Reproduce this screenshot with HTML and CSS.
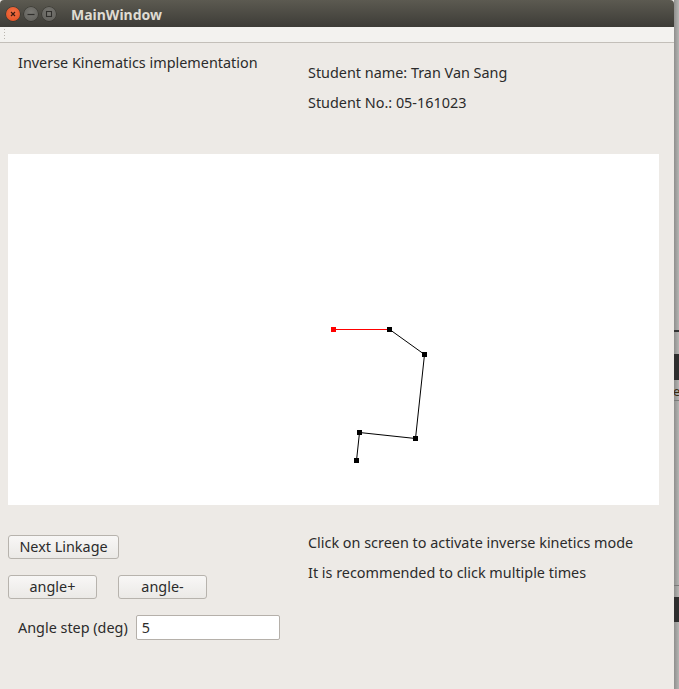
FILE: index.html
```html
<!DOCTYPE html>
<html>
<head>
<meta charset="utf-8">
<link rel="stylesheet" href="styles.css">
</head>
<body>
<div class="screen">
  <div class="window">
    <div class="titlebar">
      <div class="wbtns">
        <span class="wbtn close"><svg width="14" height="14" viewBox="0 0 14 14"><path d="M5 5 L9 9 M9 5 L5 9" stroke="#3a1a10" stroke-width="1.2"/></svg></span>
        <span class="wbtn"><svg width="14" height="14" viewBox="0 0 14 14"><path d="M3.5 7.5 H10.5" stroke="#2f2e2b" stroke-width="1.2"/></svg></span>
        <span class="wbtn"><svg width="14" height="14" viewBox="0 0 14 14"><rect x="4.5" y="4.5" width="5" height="5" fill="none" stroke="#2f2e2b" stroke-width="1.1"/></svg></span>
      </div>
      <div class="title">MainWindow</div>
    </div>
    <div class="toolbar"><span class="grip"></span></div>
    <div class="central">
      <div class="header">
        <div class="heading">Inverse Kinematics implementation</div>
        <div class="student">
          <div class="line">Student name: Tran Van Sang</div>
          <div class="line">Student No.: 05-161023</div>
        </div>
      </div>
      <div class="canvas">
        <svg width="651" height="351" viewBox="0 0 651 351">
          <g shape-rendering="crispEdges">
            <line x1="325" y1="175.5" x2="381" y2="175.5" stroke="#ff0000" stroke-width="1"/>
          </g>
          <g stroke="#000" stroke-width="1" fill="none">
            <line x1="381" y1="175" x2="416.5" y2="200.5"/>
            <line x1="416.5" y1="200.5" x2="407.5" y2="284.5"/>
            <line x1="407.5" y1="284.5" x2="351.5" y2="278.5"/>
            <line x1="351.5" y1="278.5" x2="348.5" y2="306.5"/>
          </g>
          <g shape-rendering="crispEdges">
            <rect x="323" y="173" width="5" height="5" fill="#ff0000"/>
            <rect x="379" y="173" width="5" height="5" fill="#000"/>
            <rect x="414" y="198" width="5" height="5" fill="#000"/>
            <rect x="405" y="282" width="5" height="5" fill="#000"/>
            <rect x="349" y="276" width="5" height="5" fill="#000"/>
            <rect x="346" y="304" width="5" height="5" fill="#000"/>
          </g>
        </svg>
      </div>
      <div class="controls">
        <div class="left">
          <button class="btn wide">Next Linkage</button>
          <div class="btnrow">
            <button class="btn">angle+</button>
            <button class="btn">angle-</button>
          </div>
          <div class="steprow">
            <span class="label">Angle step (deg)</span>
            <span class="input">5</span>
          </div>
        </div>
        <div class="right">
          <div class="line">Click on screen to activate inverse kinetics mode</div>
          <div class="line">It is recommended to click multiple times</div>
        </div>
      </div>
    </div>
  </div>
  <div class="behind">
    <div class="b1"></div>
    <div class="bline"></div>
    <div class="b2"></div>
    <div class="bdark"></div>
    <div class="b3"></div>
    <div class="btext">e</div>
    <div class="bline2"></div>
    <div class="b4"></div>
    <div class="bline2"></div>
    <div class="b5"></div>
    <div class="bdark2"></div>
    <div class="b6"></div>
  </div>
</div>
</body>
</html>
```

FILE: styles.css
```css
html, body {
  margin: 0;
  padding: 0;
  background: #a5a5a3;
}
.screen {
  display: flex;
  width: 679px;
  height: 689px;
  overflow: hidden;
  font-family: "Noto Sans", "DejaVu Sans", sans-serif;
  font-size: 14.4px;
  color: #2b2b2b;
}
.window {
  width: 674px;
  height: 689px;
  flex: none;
  display: flex;
  flex-direction: column;
  background: #edeae6;
}
.titlebar {
  height: 27px;
  flex: none;
  display: flex;
  align-items: center;
  background: linear-gradient(#5c5a51, #3d3c37);
  border-top-right-radius: 4px;
  border-top-left-radius: 4px;
}
.wbtns {
  display: flex;
  gap: 4px;
  margin-left: 6px;
}
.wbtn {
  width: 14px;
  height: 14px;
  border-radius: 50%;
  background: radial-gradient(circle at 50% 40%, #7a7974, #5d5c57);
  box-shadow: 0 0 0 0.5px #2f2e2a;
  display: flex;
}
.wbtn.close {
  background: radial-gradient(circle at 50% 40%, #f47449, #df4b1c);
}
.title {
  margin-left: 15px;
  font-family: "Noto Sans", "DejaVu Sans", sans-serif;
  font-weight: bold;
  font-size: 14px;
  color: #dfdbd2;
  padding-top: 1px;
}
.toolbar {
  height: 15px;
  flex: none;
  background: #f3f2ef;
  border-bottom: 1px solid #c3bfb9;
  display: flex;
  align-items: center;
}
.grip {
  margin-left: 3px;
  width: 3px;
  height: 13px;
  background-image: radial-gradient(circle, #b9b5ae 0.8px, transparent 0.9px);
  background-size: 3px 3px;
}
.central {
  display: flex;
  flex-direction: column;
  padding: 0 0 0 8px;
}
.header {
  display: flex;
  height: 111px;
}
.heading {
  width: 290px;
  padding-left: 10px;
  padding-top: 10px;
}
.student {
  padding-top: 20px;
  display: flex;
  flex-direction: column;
  gap: 11px;
}
.line {
  height: 19px;
  line-height: 19px;
}
.canvas {
  width: 651px;
  height: 351px;
  background: #ffffff;
}
.canvas svg {
  display: block;
}
.controls {
  display: flex;
  padding-top: 30px;
}
.left {
  width: 300px;
  display: flex;
  flex-direction: column;
}
.btn {
  font: inherit;
  color: inherit;
  height: 24px;
  width: 89px;
  padding: 0;
  border: 1px solid #b7b3ad;
  border-radius: 3px;
  background: linear-gradient(#f8f7f6, #ebe9e6);
  line-height: 20px;
}
.btn.wide {
  width: 111px;
}
.btnrow {
  display: flex;
  gap: 21px;
  margin-top: 16px;
}
.steprow {
  display: flex;
  align-items: center;
  margin-top: 16px;
  padding-left: 10px;
  gap: 8px;
}
.input {
  width: 137px;
  height: 23px;
  border: 1px solid #b5b0aa;
  border-radius: 2px;
  background: #fff;
  padding-left: 5px;
  line-height: 23px;
}
.right {
  display: flex;
  flex-direction: column;
  gap: 11px;
  margin-top: -2px;
}
.behind {
  width: 5px;
  flex: none;
  display: flex;
  flex-direction: column;
  overflow: hidden;
  background: linear-gradient(90deg, #8f8f8d, #b5b5b3);
}
.b1 { height: 330px; }
.bline { height: 2px; background: #333; }
.b2 { height: 22px; }
.bdark { height: 26px; background: #2e2e2e; }
.b3 { height: 3px; }
.btext { height: 17px; font-size: 13px; line-height: 17px; color: #3a2a10; margin-left: -1px; }
.bline2 { height: 1px; background: #7a7a78; }
.b4 { height: 184px; }
.b5 { height: 11px; }
.bdark2 { height: 25px; background: #2e2e2e; }
.b6 { flex: 1; }
```
